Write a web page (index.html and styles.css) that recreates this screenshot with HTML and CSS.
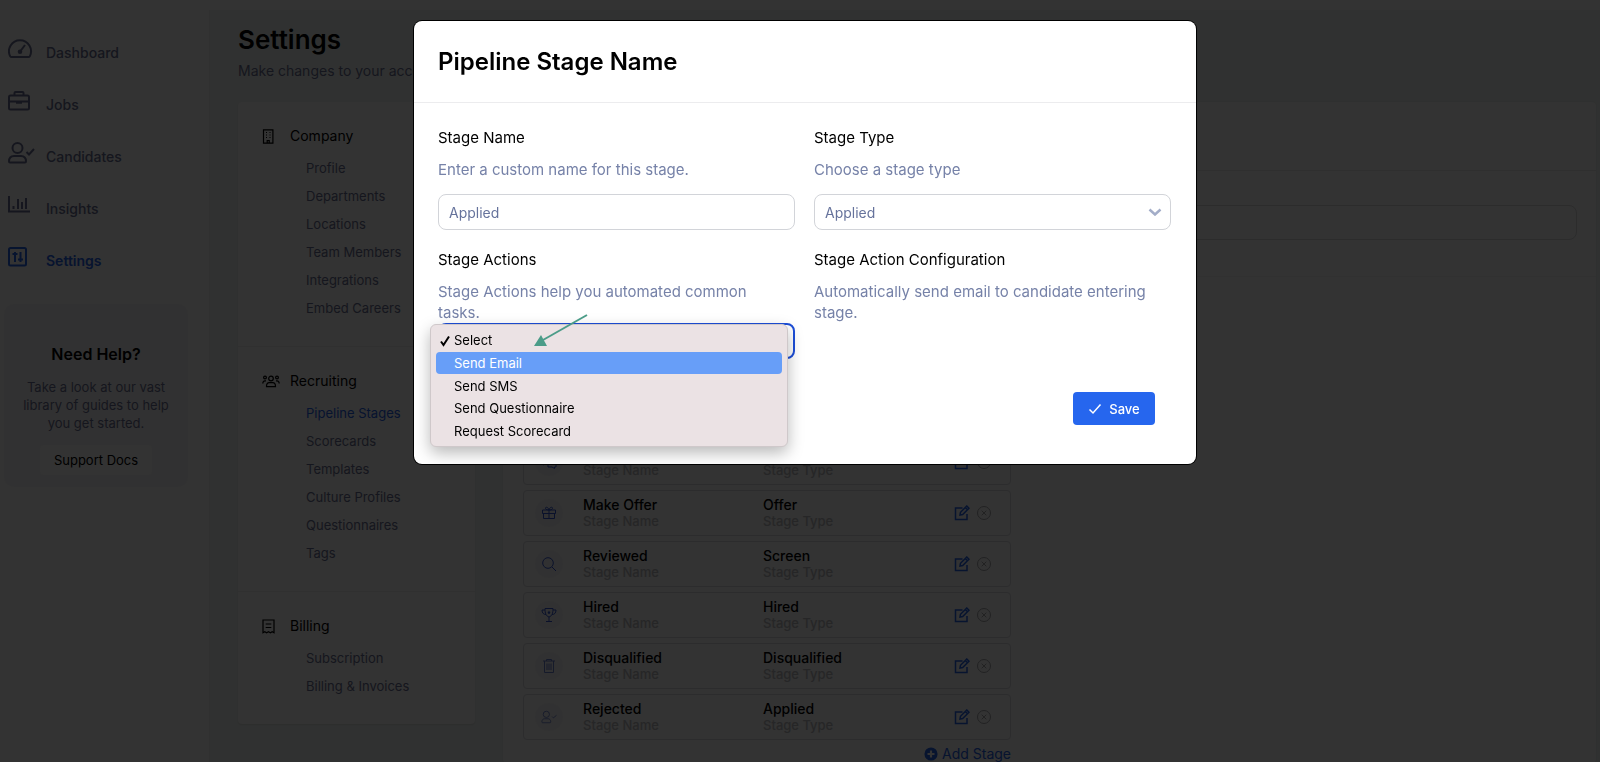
FILE: index.html
```html
<!DOCTYPE html>
<html lang="en">
<head>
<meta charset="utf-8">
<title>Settings</title>
<link rel="stylesheet" href="styles.css">
</head>
<body>
<svg class="sprite" aria-hidden="true">
  <symbol id="i-gauge" viewBox="0 0 27 22"><path d="M3.500 19h17c.6 0 1-.3 1.300-.8A11 11 0 1 0 2.200 18.200c.3.500.7.800 1.300.8Z"/><path d="m17 7-4.500 6"/><circle cx="12" cy="13.800" r="1.300" fill="currentColor"/></symbol>
  <symbol id="i-case" viewBox="0 0 27 22"><rect x="1" y="5.500" width="20" height="14" rx="1.500"/><path d="M6.500 5.500V3a1 1 0 0 1 1-1h7a1 1 0 0 1 1 1v2.500M1 11.500h20M9 11.500v1.300h4v-1.300"/></symbol>
  <symbol id="i-user" viewBox="0 0 27 22"><circle cx="9.500" cy="6" r="5"/><path d="M1 19.500c0-3.500 2-5.500 5-5.500h7c3 0 5 2 5 5.500 0 .6-.4 1-1 1H2c-.6 0-1-.4-1-1ZM18.500 10l2.500 2.500 5-5.500"/></symbol>
  <symbol id="i-chart" viewBox="0 0 27 22"><path d="M1 2v15.500h21M5.500 12v3M10 5v10M14 8v7M18 4v11"/></symbol>
  <symbol id="i-sliders" viewBox="0 0 27 22"><rect x="1" y="2" width="17" height="17.500" rx="1.500"/><path d="M7 6v10M12.500 6v10M4.500 8h5M10 13.500h5"/></symbol>
  <symbol id="i-building" viewBox="0 0 18 15"><path d="M1.500.8h9.400v13.400H1.500zM5.200 14v-2.500h2V14M4 3.500h1M7.500 3.500h1M4 6h1M7.500 6h1M4 8.500h1M7.500 8.500h1"/></symbol>
  <symbol id="i-group" viewBox="0 0 18 15"><circle cx="9" cy="4.500" r="2.300"/><circle cx="3" cy="3.500" r="1.400"/><circle cx="15" cy="3.500" r="1.400"/><path d="M4.500 12.700c0-2.500 1-4 2.700-4h3.600c1.700 0 2.700 1.500 2.700 4ZM.8 9.500c0-1.700.8-2.700 2.200-2.700h1M17.200 9.500c0-1.700-.8-2.700-2.200-2.700h-1"/></symbol>
  <symbol id="i-bill" viewBox="0 0 18 15"><path d="M1 1h11v12.700l-1.800-1-1.800 1-1.900-1-1.900 1-1.800-1-1.800 1zM3.700 5h5.600M3.700 8.500h5.600"/></symbol>
  <symbol id="i-chat" viewBox="0 0 16 16"><path d="M1 2h9v7H5l-2.500 2V9H1zM7 11v2h4l2.500 1.500V13H15V6h-3"/></symbol>
  <symbol id="i-gift" viewBox="0 0 16 16"><path d="M1.500 5h13v3.500h-13zM2.500 8.500h11v5h-11zM8 5v8.500M8 5C5 5 4.500 4 4.500 3S7 1.500 8 5c1-3.500 3.500-3 3.500-2S11 5 8 5"/></symbol>
  <symbol id="i-search" viewBox="0 0 16 16"><circle cx="7" cy="7" r="5.300"/><path d="m11 11 4 4"/></symbol>
  <symbol id="i-cup" viewBox="0 0 16 16"><path d="M4 1.500h8C12 6.500 11 9 8 10 5 9 4 6.500 4 1.500ZM4 3H1c0 3 1.500 4.500 4 4.500M12 3h3c0 3-1.500 4.500-4 4.500M8 10v4M5 14.500h6"/><path d="m8 3.500.6 1.200 1.200.2-.9.900.2 1.200L8 6.400 6.900 7l.2-1.200-.9-.9 1.200-.2Z" fill="currentColor" stroke="none"/></symbol>
  <symbol id="i-trash" viewBox="0 0 16 16"><path d="M2 3h12M5.500 3V1.500h5V3M3.500 3v11.500h9V3M6 5.500v6.500M8 5.500v6.500M10 5.500v6.500"/></symbol>
  <symbol id="i-usersm" viewBox="0 0 18 16"><circle cx="6" cy="5" r="3.500"/><path d="M1 13.500c0-2.300 1.300-3.500 3-3.500h4c1.700 0 3 1.200 3 3.500 0 .6-.3 1-.8 1H1.800c-.5 0-.8-.4-.8-1ZM12.500 7.500 14 9l3.500-3"/></symbol>
  <symbol id="i-edit" viewBox="0 0 16 16"><path d="M8.500 3H1.500v11.500H13V9M6 10l.5-2.700 6.300-6.300 2.200 2.200-6.300 6.300ZM11.300 2.500l2.200 2.200"/></symbol>
  <symbol id="i-remove" viewBox="0 0 16 16"><circle cx="8" cy="8" r="6.500"/><path d="m5.700 5.700 4.600 4.600M10.300 5.700l-4.600 4.600"/></symbol>
  <symbol id="i-plus" viewBox="0 0 16 16"><circle cx="8" cy="8" r="7.500" fill="currentColor" stroke="none"/><path d="M8 4v8M4 8h8" stroke="#fff" stroke-width="2.500"/></symbol>
  <symbol id="i-check" viewBox="0 0 14 12"><path d="m1.500 6.500 3.500 3.500 7.500-8.500"/></symbol>
</svg>

<div class="app">
  <aside class="sidebar">
    <nav class="nav">
      <a class="nav-link" href="#"><svg class="nav-icon"><use href="#i-gauge"/></svg>Dashboard</a>
      <a class="nav-link" href="#"><svg class="nav-icon"><use href="#i-case"/></svg>Jobs</a>
      <a class="nav-link" href="#"><svg class="nav-icon"><use href="#i-user"/></svg>Candidates</a>
      <a class="nav-link" href="#"><svg class="nav-icon"><use href="#i-chart"/></svg>Insights</a>
      <a class="nav-link active" href="#"><svg class="nav-icon"><use href="#i-sliders"/></svg>Settings</a>
    </nav>
    <section class="help">
      <h2 class="help-title">Need Help?</h2>
      <p class="help-text">Take a look at our vast library of guides to help you get started.</p>
      <button class="help-button" type="button">Support Docs</button>
    </section>
  </aside>

  <main class="main">
    <h1 class="page-title">Settings</h1>
    <p class="page-sub">Make changes to your account</p>
    <div class="columns">
      <nav class="menu">
        <section class="menu-section">
          <h2 class="menu-head"><svg class="menu-icon"><use href="#i-building"/></svg>Company</h2>
          <a class="menu-link" href="#">Profile</a>
          <a class="menu-link" href="#">Departments</a>
          <a class="menu-link" href="#">Locations</a>
          <a class="menu-link" href="#">Team Members</a>
          <a class="menu-link" href="#">Integrations</a>
          <a class="menu-link" href="#">Embed Careers</a>
        </section>
        <section class="menu-section">
          <h2 class="menu-head"><svg class="menu-icon"><use href="#i-group"/></svg>Recruiting</h2>
          <a class="menu-link active" href="#">Pipeline Stages</a>
          <a class="menu-link" href="#">Scorecards</a>
          <a class="menu-link" href="#">Templates</a>
          <a class="menu-link" href="#">Culture Profiles</a>
          <a class="menu-link" href="#">Questionnaires</a>
          <a class="menu-link" href="#">Tags</a>
        </section>
        <section class="menu-section">
          <h2 class="menu-head"><svg class="menu-icon"><use href="#i-bill"/></svg>Billing</h2>
          <a class="menu-link" href="#">Subscription</a>
          <a class="menu-link" href="#">Billing &amp; Invoices</a>
        </section>
      </nav>

      <section class="panel">
        <div class="panel-head"></div>
        <div class="panel-form"><input class="panel-input" type="text" aria-label="Pipeline"></div>
        <div class="stages">
          <article class="stage">
            <span class="badge"><svg class="stage-icon"><use href="#i-chat"/></svg></span>
            <div class="cell"><span class="caption">Stage Name</span></div>
            <div class="cell"><span class="caption">Stage Type</span></div>
            <div class="tools"><button class="tool" type="button" aria-label="Edit"><svg><use href="#i-edit"/></svg></button><button class="tool muted" type="button" aria-label="Remove"><svg><use href="#i-remove"/></svg></button></div>
          </article>
          <article class="stage">
            <span class="badge"><svg class="stage-icon"><use href="#i-gift"/></svg></span>
            <div class="cell"><strong>Make Offer</strong><span class="caption">Stage Name</span></div>
            <div class="cell"><strong>Offer</strong><span class="caption">Stage Type</span></div>
            <div class="tools"><button class="tool" type="button" aria-label="Edit"><svg><use href="#i-edit"/></svg></button><button class="tool muted" type="button" aria-label="Remove"><svg><use href="#i-remove"/></svg></button></div>
          </article>
          <article class="stage">
            <span class="badge"><svg class="stage-icon"><use href="#i-search"/></svg></span>
            <div class="cell"><strong>Reviewed</strong><span class="caption">Stage Name</span></div>
            <div class="cell"><strong>Screen</strong><span class="caption">Stage Type</span></div>
            <div class="tools"><button class="tool" type="button" aria-label="Edit"><svg><use href="#i-edit"/></svg></button><button class="tool muted" type="button" aria-label="Remove"><svg><use href="#i-remove"/></svg></button></div>
          </article>
          <article class="stage">
            <span class="badge"><svg class="stage-icon"><use href="#i-cup"/></svg></span>
            <div class="cell"><strong>Hired</strong><span class="caption">Stage Name</span></div>
            <div class="cell"><strong>Hired</strong><span class="caption">Stage Type</span></div>
            <div class="tools"><button class="tool" type="button" aria-label="Edit"><svg><use href="#i-edit"/></svg></button><button class="tool muted" type="button" aria-label="Remove"><svg><use href="#i-remove"/></svg></button></div>
          </article>
          <article class="stage">
            <span class="badge soft"><svg class="stage-icon"><use href="#i-trash"/></svg></span>
            <div class="cell"><strong>Disqualified</strong><span class="caption">Stage Name</span></div>
            <div class="cell"><strong>Disqualified</strong><span class="caption">Stage Type</span></div>
            <div class="tools"><button class="tool" type="button" aria-label="Edit"><svg><use href="#i-edit"/></svg></button><button class="tool muted" type="button" aria-label="Remove"><svg><use href="#i-remove"/></svg></button></div>
          </article>
          <article class="stage">
            <span class="badge soft"><svg class="stage-icon"><use href="#i-usersm"/></svg></span>
            <div class="cell"><strong>Rejected</strong><span class="caption">Stage Name</span></div>
            <div class="cell"><strong>Applied</strong><span class="caption">Stage Type</span></div>
            <div class="tools"><button class="tool" type="button" aria-label="Edit"><svg><use href="#i-edit"/></svg></button><button class="tool muted" type="button" aria-label="Remove"><svg><use href="#i-remove"/></svg></button></div>
          </article>
          <button class="add" type="button"><svg class="add-icon"><use href="#i-plus"/></svg>Add Stage</button>
        </div>
      </section>
    </div>
  </main>
</div>

<div class="overlay">
  <form class="modal" role="dialog" aria-labelledby="modal-title">
    <header class="modal-head"><h2 class="modal-title" id="modal-title">Pipeline Stage Name</h2></header>
    <div class="modal-body">
      <div class="field">
        <label class="label" for="name">Stage Name</label>
        <p class="hint">Enter a custom name for this stage.</p>
        <input class="control" id="name" type="text" value="Applied">
      </div>
      <div class="field">
        <label class="label" for="type">Stage Type</label>
        <p class="hint">Choose a stage type</p>
        <div class="select-wrap">
          <select class="control" id="type"><option>Applied</option></select>
          <svg class="chevron" viewBox="0 0 14 8"><path d="m1.500 1.500 5.500 5 5.500-5"/></svg>
        </div>
      </div>
      <div class="field">
        <label class="label" for="action">Stage Actions</label>
        <p class="hint flush">Stage Actions help you automated common tasks.</p>
        <div class="select-wrap">
          <select class="control focused" id="action"><option>Select</option></select>
          <ul class="popup" role="listbox" aria-label="Stage Actions">
            <li class="option" role="option" aria-selected="true"><svg class="tick" viewBox="0 0 12 12"><path d="m2 6.500 2.500 3.500 5.500-8.500"/></svg>Select</li>
            <li class="option hover" role="option">Send Email</li>
            <li class="option" role="option">Send SMS</li>
            <li class="option" role="option">Send Questionnaire</li>
            <li class="option" role="option">Request Scorecard</li>
          </ul>
          <svg class="arrow" viewBox="0 0 56 34"><path class="arrow-line" d="M54 2 10 27"/><path class="arrow-head" d="m1 33 7-11 6 11Z"/></svg>
        </div>
      </div>
      <div class="field">
        <h3 class="label">Stage Action Configuration</h3>
        <p class="hint flush">Automatically send email to candidate entering stage.</p>
      </div>
    </div>
    <footer class="modal-foot">
      <button class="save" type="submit"><svg class="save-icon"><use href="#i-check"/></svg>Save</button>
    </footer>
  </form>
</div>
</body>
</html>
```
FILE: styles.css
```css
* { box-sizing: border-box; }
body {
  margin: 0;
  height: 100vh;
  overflow: hidden;
  font-family: Inter, "Liberation Sans", sans-serif;
  font-size: 14px;
  color: #000;
  background: #fff;
}
h1, h2, h3, p, ul { margin: 0; padding: 0; }
a { color: inherit; text-decoration: none; }
button, input, select { font: inherit; }
button { border: 0; background: none; padding: 0; color: inherit; }
svg { fill: none; stroke: currentColor; }
.sprite { position: absolute; width: 0; height: 0; }

.app { display: flex; height: 100vh; overflow: hidden; padding-top: 10px; background: #fdfdfd; }

/* Sidebar */
.sidebar { width: 210px; flex: none; border-right: 1px solid #f0f0f0; padding: 16px 21px 0 4px; }
.nav { display: flex; flex-direction: column; padding-left: 4px; }
.nav-link { display: flex; align-items: center; gap: 11px; height: 52px; color: #6c7194; font-weight: 500; }
.nav-icon { width: 27px; height: 22px; stroke-width: 2; margin-bottom: 6px; }
.nav-link.active, .menu-link.active { color: #2563eb; }
.nav-link.active { font-weight: 600; }
.help { margin-top: 18px; padding: 40px 12px 12px; border-radius: 10px; background: #f6f6f7; text-align: center; }
.help-title { font-size: 16px; font-weight: 600; line-height: 20px; }
.help-text { margin: 14px 0 13px; font-size: 13px; line-height: 18px; color: #6c7194; }
.help-button { width: 112px; height: 30px; border-radius: 4px; background: #fdfdfd; font-size: 13px; font-weight: 400; }

/* Page */
.main { display: flex; flex-direction: column; flex: 1; min-width: 0; padding: 14px 4px 0 28px; background: #f1f6f3; }
.page-title { font-size: 26px; font-weight: 600; line-height: 32px; }
.page-sub { margin: 5px 0 21px; line-height: 20px; color: #6c7194; }
.columns { display: flex; align-items: flex-start; flex: 1; gap: 28px; }
.menu { width: 237px; flex: none; border-radius: 4px; background: #fdfdfd; box-shadow: 0 1px 2px rgba(0, 0, 0, .1); }
.menu-section { padding: 24px 24px 24px; border-bottom: 1px solid #f0f0f0; }
.menu-section:last-child { border-bottom: 0; }
.menu-head { display: flex; align-items: center; gap: 10px; margin-bottom: 8px; font-size: 14px; font-weight: 400; line-height: 20px; }
.menu-icon { width: 18px; height: 15px; stroke-width: 1.2; }
.menu-link { display: block; padding-left: 44px; line-height: 28px; font-size: 13px; color: #6c7194; white-space: nowrap; }

.panel { flex: 1; align-self: stretch; border-radius: 4px; background: #fdfdfd; box-shadow: 0 0 2px rgba(0, 0, 0, .1); }
.panel-head { height: 69px; border-bottom: 1px solid #ececec; }
.panel-form { padding: 34px 19px 36px; border-bottom: 1px solid #f3f3f3; }
.panel-input { display: block; width: 100%; height: 35px; border: 1px solid #d9dadd; border-radius: 8px; background: none; }
.stages { display: flex; flex-direction: column; gap: 5px; width: 488px; margin: 162px 0 0 20px; }
.stage { display: flex; align-items: center; height: 46px; padding: 0 18px 0 11px; border: 1px solid #dcdcdf; border-radius: 4px; }
.badge { display: grid; place-items: center; width: 28px; height: 28px; margin-right: 20px; border-radius: 50%; background: #f6f6f8; color: #3358d4; }
.badge.soft { color: #6880d0; }
.stage-icon { width: 16px; height: 16px; }
.cell { display: flex; flex-direction: column; justify-content: flex-end; width: 180px; height: 34px; line-height: 17px; font-size: 14px; }
.cell strong { font-weight: 500; }
.caption { color: #bcbcc0; font-size: 13px; font-weight: 500; }
.tools { display: flex; gap: 6px; margin-left: auto; }
.tool { display: block; width: 16px; height: 16px; color: #2563eb; }
.tool svg { display: block; width: 16px; height: 16px; stroke-width: 1.5; }
.tool.muted { color: #a8a8ac; }
.tool.muted svg { stroke-width: 1; }
.add { display: flex; align-items: center; justify-content: flex-end; gap: 4px; line-height: 18px; color: #2563eb; font-weight: 400; }
.add-icon { width: 14px; height: 14px; }

/* Modal */
.overlay { position: fixed; inset: 0; display: flex; align-items: flex-start; justify-content: center; padding: 21px 0 0 10px; background: rgba(0, 0, 0, .8); }
.modal { width: 782px; border-radius: 8px; background: #fff; box-shadow: 0 0 0 1px #000; }
.modal-head { padding: 24px; border-bottom: 1px solid #ececee; }
.modal-title { font-size: 24px; font-weight: 600; line-height: 33px; }
.modal-body { display: grid; grid-template-columns: 1fr 1fr; gap: 19px; padding: 24px 25px 0 24px; }
.field { display: flex; flex-direction: column; }
.label { font-size: 15px; font-weight: 400; line-height: 22px; }
.hint { margin: 10px 0 14px; padding-right: 8px; font-size: 15px; line-height: 21px; color: #7682a8; }
.hint.flush { margin-bottom: 0; }
.control { display: block; width: 100%; height: 36px; padding: 0 10px; border: 1px solid #d2d4d9; border-radius: 8px; background: #fff; color: #66739c; font-size: 14px; appearance: none; outline: 0; }
.control.focused { border: 2px solid #1d4ed8; }
.select-wrap { position: relative; }
.chevron { position: absolute; right: 9px; top: 14px; width: 14px; height: 8px; stroke: #a3adc8; stroke-width: 2.5; }
.popup { position: absolute; left: -8px; top: 1px; right: 7px; display: flex; flex-direction: column; justify-content: space-between; height: 123px; padding: 4px 5px; border: 1px solid #cfc8ca; border-radius: 6px; background: #ebe2e4; box-shadow: 0 6px 16px rgba(0, 0, 0, .28); list-style: none; }
.option { position: relative; padding-left: 18px; border-radius: 4px; font-size: 13px; line-height: 22px; }
.option.hover { background: #679ef8; color: #fff; }
.tick { position: absolute; left: 3px; top: 6px; width: 12px; height: 12px; stroke-width: 2; }
.arrow { position: absolute; left: 95px; top: -10px; width: 56px; height: 34px; }
.arrow-line { stroke: #4b9c88; stroke-width: 2; }
.arrow-head { fill: #4b9c88; stroke: none; }
.modal-foot { display: flex; justify-content: flex-end; padding: 33px 41px 39px; }
.save { display: flex; align-items: center; justify-content: center; gap: 7px; width: 82px; height: 33px; border-radius: 4px; background: #2666ee; color: #fff; font-size: 13px; font-weight: 500; }
.save-icon { width: 14px; height: 12px; stroke-width: 1.5; }
```
